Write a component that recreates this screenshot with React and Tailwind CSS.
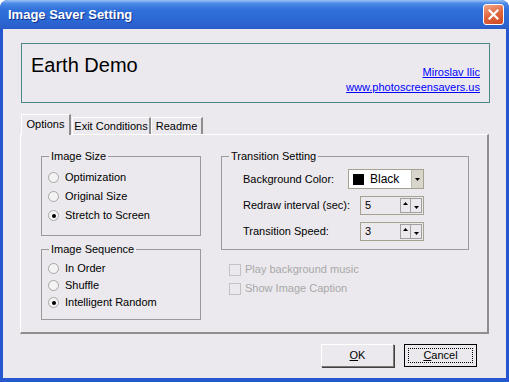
import React from 'react';

const Radio = ({ checked, label }) => (
  <div className="flex items-center h-full">
    <div className="w-[11px] h-[11px] rounded-full border border-[#a7a7a7] bg-[#f3f3f3] flex items-center justify-center">
      {checked && <div className="w-[4px] h-[4px] rounded-full bg-black" />}
    </div>
    <span className="ml-[6px]">{label}</span>
  </div>
);

const Group = ({ title, className, children }) => (
  <div className={`relative border border-[#9a9a9a] ${className}`}>
    <span className="absolute -top-[8px] left-[7px] px-[2px] bg-[#ebe9ed] leading-[14px]">{title}</span>
    {children}
  </div>
);

const Spin = ({ value }) => (
  <div className="w-[64px] h-[19px] border border-[#a5a28f] flex items-center">
    <span className="ml-[4px] flex-1">{value}</span>
    <div className="flex h-[15px] mr-[1px]">
      <div className="w-[11px] h-full border border-[#a0a0a0] flex justify-center pt-[3px]">
        <svg width="5" height="3" viewBox="0 0 5 3"><path d="M2.5 0L5 3H0z" fill="#000" /></svg>
      </div>
      <div className="w-[11px] h-full border border-l-0 border-[#a0a0a0] flex justify-center items-end pb-[3px]">
        <svg width="5" height="3" viewBox="0 0 5 3"><path d="M0 0H5L2.5 3z" fill="#000" /></svg>
      </div>
    </div>
  </div>
);

const Check = ({ label }) => (
  <div className="flex items-center h-[19px]">
    <div className="w-[12px] h-[12px] border border-[#c2c2c2]" />
    <span className="ml-[4px] text-[#a8a8a8]">{label}</span>
  </div>
);

export default function App() {
  return (
    <div className="w-[509px] h-[382px] flex flex-col overflow-hidden rounded-t-[8px] bg-[#2558d0] font-['Liberation_Sans',Arial,sans-serif] text-[11px] text-black">
      {/* title bar */}
      <div className="h-[29px] flex items-center pl-[8px] pr-[5px] bg-[linear-gradient(180deg,#9cc4f5_0%,#4a8ae6_12%,#2f6fd9_35%,#2c68d4_70%,#2a5cc9_100%)]">
        <span className="text-white font-bold text-[13px] [text-shadow:1px_1px_0_#12318c]">Image Saver Setting</span>
        <div className="ml-auto w-[21px] h-[21px] rounded-[3px] border border-white bg-[linear-gradient(160deg,#f2a88a_0%,#e2653e_50%,#cc4a24_100%)] flex items-center justify-center">
          <svg width="11" height="11" viewBox="0 0 11 11">
            <path d="M1.5 1.5L9.5 9.5M9.5 1.5L1.5 9.5" stroke="#fff" strokeWidth="2.2" strokeLinecap="square" />
          </svg>
        </div>
      </div>

      {/* client area */}
      <div className="flex-1 mx-[3px] mb-[4px] bg-[#ebe9ed] flex flex-col pl-[17px] pt-[14px]">
        {/* header box */}
        <div className="ml-[1px] w-[469px] h-[60px] border border-[#4a8888] flex justify-between px-[9px]">
          <div className="pt-[10px] text-[20px] leading-[23px]">Earth Demo</div>
          <div className="flex flex-col items-end justify-end pb-[7px] text-[#0000ff] underline leading-[15px]">
            <span>Miroslav Ilic</span>
            <span>www.photoscreensavers.us</span>
          </div>
        </div>

        {/* tabs */}
        <div className="mt-[11px] h-[20px] flex items-end">
          <div className="relative z-10 -mb-px ml-[1px] w-[50px] h-[21px] bg-[#ebe9ed] border-l border-t border-white border-r-2 border-r-[#8e8e8e] flex items-center justify-center pb-[1px]">
            Options
          </div>
          <div className="ml-px w-[79px] h-[17px] border-l border-t border-white border-r-2 border-r-[#8e8e8e] flex items-center justify-center">
            Exit Conditions
          </div>
          <div className="w-[52px] h-[17px] border-l border-t border-white border-r-2 border-r-[#8e8e8e] flex items-center justify-center">
            Readme
          </div>
        </div>

        {/* tab panel */}
        <div className="w-[469px] h-[200px] border-l border-t border-white border-r-2 border-b-2 border-r-[#8e8e8e] border-b-[#8e8e8e] flex pl-[20px] pt-[21px]">
          <div className="w-[160px] flex flex-col">
            <Group title="Image Size" className="h-[80px] pl-[6px] pt-[11px]">
              <div className="h-[19px]"><Radio label="Optimization" /></div>
              <div className="h-[19px]"><Radio label="Original Size" /></div>
              <div className="h-[19px]"><Radio checked label="Stretch to Screen" /></div>
            </Group>
            <Group title="Image Sequence" className="mt-[13px] h-[71px] pl-[6px] pt-[10px]">
              <div className="h-[17px]"><Radio label="In Order" /></div>
              <div className="h-[17px]"><Radio label="Shuffle" /></div>
              <div className="h-[17px]"><Radio checked label="Intelligent Random" /></div>
            </Group>
          </div>

          <div className="ml-[20px] w-[248px] flex flex-col">
            <Group title="Transition Setting" className="h-[94px] pl-[21px] pt-[9px]">
              <div className="h-[26px] flex items-center">
                <span className="w-[105px]">Background Color:</span>
                <div className="w-[76px] h-[20px] border border-[#a5a28f] bg-white flex items-center">
                  <div className="ml-[4px] w-[11px] h-[11px] bg-black" />
                  <span className="ml-[6px] flex-1 text-[12px]">Black</span>
                  <div className="w-[12px] h-full bg-[#d8d5cc] border-l border-[#bdb9ab] flex items-center justify-center">
                    <svg width="5" height="3" viewBox="0 0 5 3"><path d="M0 0H5L2.5 3z" fill="#000" /></svg>
                  </div>
                </div>
              </div>
              <div className="h-[26px] flex items-center">
                <span className="w-[117px]">Redraw interval (sec):</span>
                <Spin value="5" />
              </div>
              <div className="h-[26px] flex items-center">
                <span className="w-[117px]">Transition Speed:</span>
                <Spin value="3" />
              </div>
            </Group>
            <div className="mt-[10px] ml-[8px]">
              <Check label="Play background music" />
              <Check label="Show Image Caption" />
            </div>
          </div>
        </div>

        {/* buttons */}
        <div className="mt-[10px] flex justify-end pr-[29px] gap-[10px]">
          <button className="w-[73px] h-[23px] border border-t-white border-l-white border-r-[#7a7a7a] border-b-[#7a7a7a] bg-[#ebe9ed] shadow-[1px_1px_0_#404040]">
            <span className="underline">O</span>K
          </button>
          <button className="w-[73px] h-[23px] border border-black bg-[#ebe9ed] p-[3px]">
            <div className="w-full h-full border border-dotted border-black flex items-center justify-center">
              <span><span className="underline">C</span>ancel</span>
            </div>
          </button>
        </div>
      </div>
    </div>
  );
}
